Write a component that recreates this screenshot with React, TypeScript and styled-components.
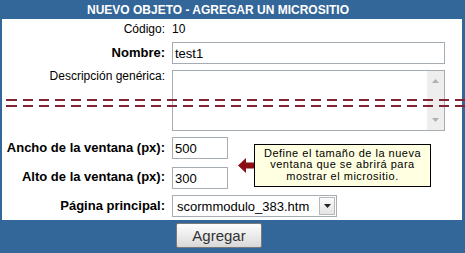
import styled, { createGlobalStyle } from 'styled-components';

const GlobalStyle = createGlobalStyle`
  html, body {
    margin: 0;
    padding: 0;
    background: #336699;
  }
  body {
    font-family: 'Liberation Sans', Arial, sans-serif;
    color: #000;
  }
`;

const Page = styled.div`
  position: relative;
  width: 465px;
  height: 253px;
  overflow: hidden;
  background: #336699;
`;

const Header = styled.div`
  height: 19px;
  padding-left: 87px;
  color: #fff;
  font-size: 12px;
  font-weight: bold;
  line-height: 21px;
`;

const Panel = styled.div`
  margin: 0 3px 0 2px;
  padding-right: 17px;
  background: #fff;
  display: grid;
  grid-template-columns: 170px 66px 1fr;
  align-items: center;
`;

const Label = styled.div<{ $bold?: boolean; $start?: boolean }>`
  grid-column: 1;
  align-self: ${(p) => (p.$start ? 'start' : 'center')};
  padding: ${(p) => (p.$start ? '2px' : '0')} 7px 0 0;
  text-align: right;
  font-size: ${(p) => (p.$bold ? '13px' : '12px')};
  font-weight: ${(p) => (p.$bold ? 'bold' : 'normal')};
  line-height: ${(p) => (p.$start ? '14px' : '20px')};
  white-space: nowrap;
`;

const Value = styled.div`
  grid-column: 2 / 4;
  font-size: 12px;
  line-height: 20px;
`;

const Input = styled.input<{ $wide?: boolean; $top?: number }>`
  grid-column: ${(p) => (p.$wide ? '2 / 4' : '2')};
  width: ${(p) => (p.$wide ? '273px' : '56px')};
  height: 22px;
  box-sizing: border-box;
  margin: ${(p) => p.$top ?? 3}px 0 3px;
  padding: 0 2px;
  border: 1px solid #a5acb2;
  font-family: 'Liberation Sans', Arial, sans-serif;
  font-size: 13px;
  color: #000;
  outline: none;
`;

const TextBox = styled.div`
  grid-column: 2 / 4;
  width: 273px;
  height: 61px;
  box-sizing: border-box;
  margin: 3px 0;
  border: 1px solid #a5acb2;
  display: flex;
`;

const TextArea = styled.textarea`
  flex: 1;
  border: none;
  resize: none;
  outline: none;
  overflow: hidden;
  font-family: 'Liberation Sans', Arial, sans-serif;
  font-size: 13px;
`;

const ScrollTrack = styled.div`
  width: 17px;
  background: #eeeeee;
  display: flex;
  flex-direction: column;
  justify-content: space-between;
  align-items: center;
  padding: 8px 0;
`;

const Callout = styled.div`
  grid-column: 3;
  grid-row: 4 / 6;
  display: flex;
  align-items: center;
  margin-top: 5px;
`;

const Tip = styled.div`
  width: 177px;
  box-sizing: border-box;
  padding: 3px 2px 4px;
  background: #ffffe1;
  border: 1px solid #000;
  font-size: 11px;
  letter-spacing: 0.5px;
  line-height: 11.5px;
  text-align: center;
`;

const SelectBox = styled.div`
  grid-column: 2 / 4;
  width: 165px;
  height: 22px;
  box-sizing: border-box;
  margin: 3px 0;
  border: 1px solid #a5acb2;
  display: flex;
  align-items: center;
  font-size: 13px;
  padding-left: 4px;
`;

const SelectText = styled.span`
  flex: 1;
`;

const DropButton = styled.div`
  width: 16px;
  height: 18px;
  box-sizing: border-box;
  margin-right: 1px;
  border: 1px solid #b8b8b8;
  background: linear-gradient(#fbfbfb, #e4e4e4);
  display: flex;
  align-items: center;
  justify-content: center;
`;

const Footer = styled.div`
  padding: 3px 0 0 176px;
`;

const Button = styled.button`
  width: 86px;
  height: 25px;
  border: 1px solid #7a7a7a;
  border-radius: 2px;
  background: linear-gradient(#fdfdfd, #e8e8e8 60%, #d8d8d8);
  font-family: 'Liberation Sans', Arial, sans-serif;
  font-size: 15px;
  color: #333;
  padding: 0;
`;

const CutLine = styled.div<{ $y: number }>`
  position: absolute;
  left: 0;
  right: 0;
  top: ${(p) => p.$y}px;
  height: 2px;
  background: repeating-linear-gradient(to right, #842334 0 10px, transparent 10px 16px);
  background-position-x: 7px;
`;

const Tri = ({ up, color }: { up?: boolean; color: string }) => (
  <svg width="7" height="4" viewBox="0 0 7 4">
    <polygon points={up ? '0,4 3.5,0 7,4' : '0,0 7,0 3.5,4'} fill={color} />
  </svg>
);

const Arrow = () => (
  <svg width="16" height="15" viewBox="0 0 16 15" style={{ flexShrink: 0 }}>
    <polygon points="0,7.5 8,0 8,4.5 16,4.5 16,10.5 8,10.5 8,15" fill="#8b0e14" />
  </svg>
);

export default function App() {
  return (
    <Page>
      <GlobalStyle />
      <Header>NUEVO OBJETO - AGREGAR UN MICROSITIO</Header>
      <Panel>
        <Label>Código:</Label>
        <Value>10</Value>

        <Label $bold>Nombre:</Label>
        <Input $wide defaultValue="test1" />

        <Label $start>Descripción genérica:</Label>
        <TextBox>
          <TextArea />
          <ScrollTrack>
            <Tri up color="#b0b0b0" />
            <Tri color="#b0b0b0" />
          </ScrollTrack>
        </TextBox>

        <Label $bold>Ancho de la ventana (px):</Label>
        <Input defaultValue="500" />
        <Callout>
          <Arrow />
          <Tip>
            Define el tamaño de la nueva ventana que se abrirá para mostrar el micrositio.
          </Tip>
        </Callout>

        <Label $bold>Alto de la ventana (px):</Label>
        <Input defaultValue="300" $top={5} />

        <Label $bold>Página principal:</Label>
        <SelectBox>
          <SelectText>scormmodulo_383.htm</SelectText>
          <DropButton>
            <Tri color="#222" />
          </DropButton>
        </SelectBox>
      </Panel>
      <Footer>
        <Button>Agregar</Button>
      </Footer>
      <CutLine $y={99} />
      <CutLine $y={105} />
    </Page>
  );
}
